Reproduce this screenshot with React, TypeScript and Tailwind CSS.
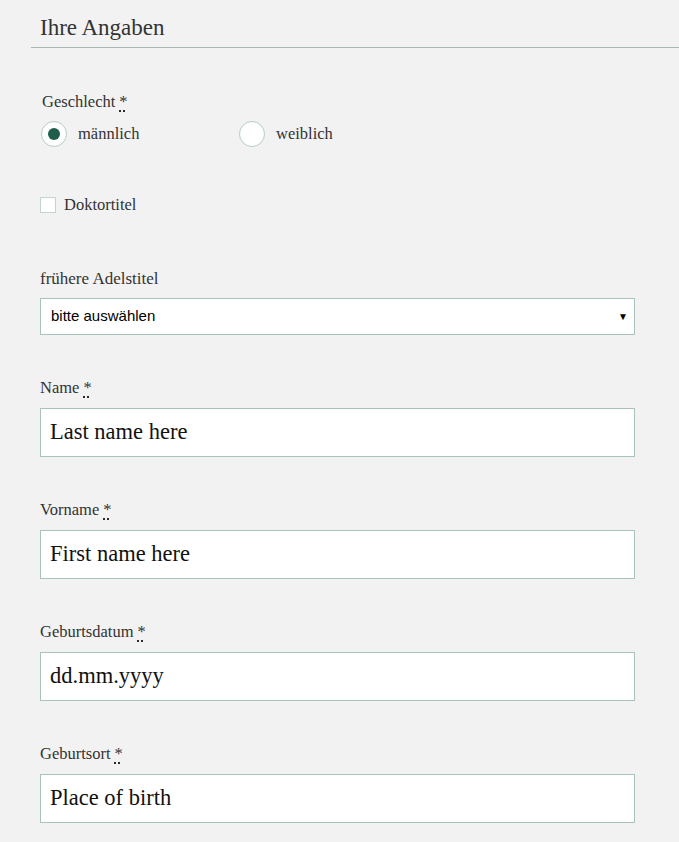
const serif = { fontFamily: '"Liberation Serif", "Times New Roman", serif' };

function Req() {
  return (
    <span className="ml-[4px] underline decoration-dotted decoration-black underline-offset-[4px]">*</span>
  );
}

function Field({ label, value }: { label: string; value: string }) {
  return (
    <div className="mt-[43px] first:mt-0">
      <div className="text-[16.5px] leading-[20px] text-[#333]">
        {label}
        <Req />
      </div>
      <div className="mt-[10px] w-[595px] h-[49px] bg-white border border-[#a9c3ba] flex items-center px-[9px] text-[22.5px] text-[#111]">
        {value}
      </div>
    </div>
  );
}

function Radio({ label, checked }: { label: string; checked?: boolean }) {
  return (
    <label className="flex items-center gap-[11px]">
      <span className="w-[26px] h-[26px] rounded-full bg-white border border-[#b7cdc5] flex items-center justify-center">
        {checked && <span className="w-[12px] h-[12px] rounded-full bg-[#1f5e4b]" />}
      </span>
      <span className="text-[16.5px] text-[#333]">{label}</span>
    </label>
  );
}

export default function App() {
  return (
    <div className="min-h-screen bg-[#f2f2f2] pb-[20px]" style={serif}>
      <div className="ml-[31px] pl-[9px] pt-[14px] pb-[5px] border-b border-[#a8b8b2]">
        <h1 className="text-[23px] leading-[28px] text-[#333]">Ihre Angaben</h1>
      </div>

      <div className="pl-[40px]">
        <div className="mt-[44px] ml-[2px] text-[16.5px] leading-[20px] text-[#333]">
          Geschlecht
          <Req />
        </div>
        <div className="mt-[9px] ml-[1px] flex">
          <div className="w-[198px]">
            <Radio label="männlich" checked />
          </div>
          <Radio label="weiblich" />
        </div>

        <label className="mt-[46px] flex items-center gap-[8px]">
          <span className="w-[16px] h-[16px] bg-white border border-[#c3d3cd]" />
          <span className="text-[16.5px] text-[#333]">Doktortitel</span>
        </label>

        <div className="mt-[51px] text-[17px] leading-[20px] text-[#333]">frühere Adelstitel</div>
        <div
          className="mt-[9px] w-[595px] h-[37px] bg-white border border-[#a9c3ba] flex items-center justify-between pl-[10px] pr-[6px] text-[15px] text-black"
          style={{ fontFamily: '"Liberation Sans", Arial, sans-serif' }}
        >
          <span>bitte auswählen</span>
          <span className="text-[10px]">▼</span>
        </div>

        <div className="mt-[43px]">
          <Field label="Name" value="Last name here" />
          <Field label="Vorname" value="First name here" />
          <Field label="Geburtsdatum" value="dd.mm.yyyy" />
          <Field label="Geburtsort" value="Place of birth" />
        </div>
      </div>
    </div>
  );
}
